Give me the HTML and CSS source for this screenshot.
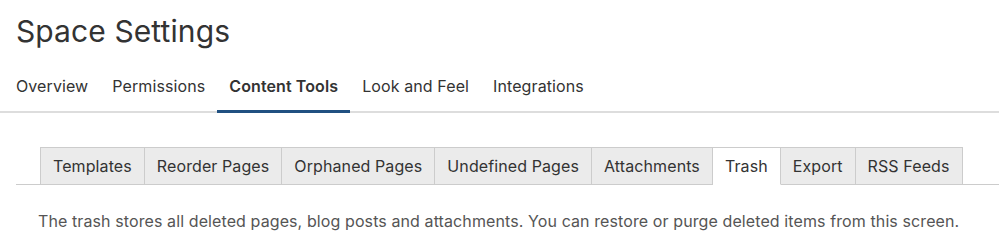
FILE: index.html
```html
<!DOCTYPE html>
<html lang="en">
<head>
  <meta charset="UTF-8" />
  <meta name="viewport" content="width=device-width, initial-scale=1.0" />
  <title>Space Settings</title>
  <link rel="stylesheet" href="styles.css">
</head>
<body>
<div class="header">
  <h1>Space Settings</h1>
</div>
<ul class="main-nav">
  <li><a href="#">Overview</a></li>
  <li><a href="#">Permissions</a></li>
  <li class="active"><a href="#">Content Tools</a></li>
  <li><a href="#">Look and Feel</a></li>
  <li><a href="#">Integrations</a></li>
</ul>
<div class="section">
  <ul class="tabs">
    <li><a href="#">Templates</a></li>
    <li><a href="#">Reorder Pages</a></li>
    <li><a href="#">Orphaned Pages</a></li>
    <li><a href="#">Undefined Pages</a></li>
    <li><a href="#">Attachments</a></li>
    <li class="active"><a href="#">Trash</a></li>
    <li><a href="#">Export</a></li>
    <li><a href="#">RSS Feeds</a></li>
  </ul>
  <p class="description">
    The trash stores all deleted pages, blog posts and attachments. You can restore or purge deleted items from this screen.
  </p>
</div>
</body>
</html>
```

FILE: styles.css
```css
body,
html {
  font-family: Inter, "Liberation Sans", Arial, sans-serif;
  letter-spacing: 0.1px;
  margin: 0;
  padding: 0;
  background-color: #fff;
  color: #333;
}
a {
  color: inherit;
  text-decoration: none;
}
ul {
  list-style: none;
  margin: 0;
  padding: 0;
}

.header {
  padding: 11px 16px 0;
}
h1 {
  margin: 0;
  font-size: 30px;
  font-weight: normal;
  line-height: 40px;
  color: #333;
}

.main-nav {
  display: flex;
  margin-top: 22px;
  padding: 0 4px;
  border-bottom: 2px solid #ddd;
}
.main-nav li a {
  display: block;
  padding: 0 12px;
  font-size: 16px;
  line-height: 26px;
  padding-bottom: 11px;
  border-bottom: 3px solid transparent;
  margin-bottom: -2px;
}
.main-nav li.active a {
  font-weight: 600;
  border-bottom-color: #205081;
}

.section {
  padding: 34px 0 0 16px;
}
.tabs {
  display: flex;
  padding-left: 24px;
  border-bottom: 1px solid #ccc;
}
.tabs li {
  margin-bottom: -1px;
}
.tabs li a {
  display: block;
  padding: 0 12px;
  font-size: 16px;
  line-height: 36px;
  background-color: #ebebeb;
  border: 1px solid #ccc;
  border-bottom: none;
  border-left: none;
}
.tabs li:first-child a {
  border-left: 1px solid #ccc;
}
.tabs li.active a {
  background-color: #fff;
  border-bottom: 1px solid #fff;
}

.description {
  margin: 24px 0 0;
  padding-left: 22px;
  font-size: 16px;
  line-height: 24px;
  color: #555;
}
```
